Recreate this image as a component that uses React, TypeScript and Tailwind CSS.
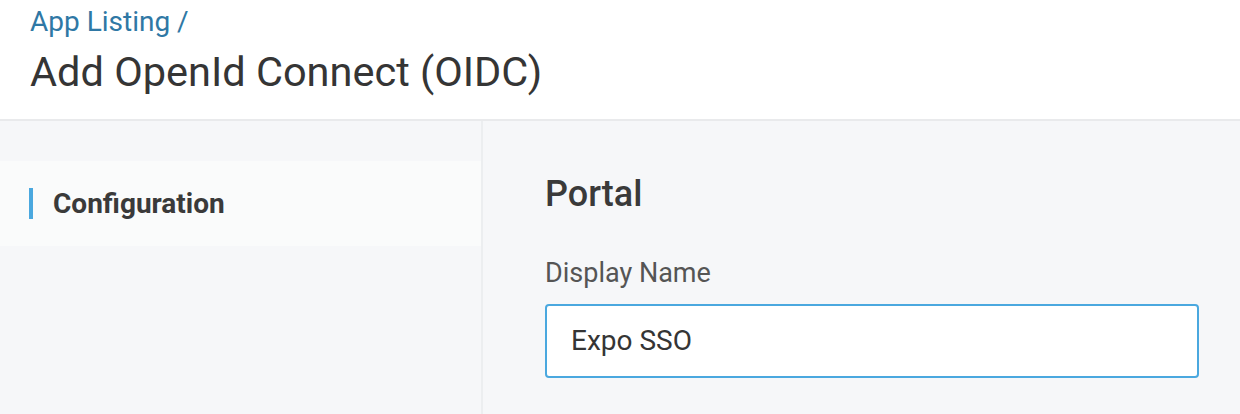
import React from "react";

export default function App() {
  return (
    <div className="w-[1240px] h-[414px] overflow-hidden bg-[#f6f7f9] flex flex-col" style={{ fontFamily: "Roboto, 'Noto Sans', sans-serif" }}>
      <header className="h-[121px] shrink-0 bg-white border-b-2 border-[#e9eaec] pl-[30px] pt-[6px]">
        <div className="text-[28px] leading-[32px] text-[#2f78a5]">App Listing /</div>
        <h1 className="mt-[9px] text-[41.5px] leading-[50px] text-[#353535]">Add OpenId Connect (OIDC)</h1>
      </header>
      <div className="flex flex-1">
        <aside className="w-[483px] shrink-0 border-r-2 border-[#eceef0] pt-[40px]">
          <div className="h-[85px] bg-[#fafbfb] flex items-center pl-[29px]">
            <span className="w-[4px] h-[31px] bg-[#4aa8df]" />
            <span className="ml-[20px] text-[28px] leading-[32px] font-bold text-[#3a3a3a]">Configuration</span>
          </div>
        </aside>
        <main className="flex-1 pl-[62px] pr-[41px] pt-[51px]">
          <h2 className="text-[36px] leading-[44px] font-medium text-[#3a3a3a]">Portal</h2>
          <label className="block mt-[41px] text-[27px] leading-[32px] text-[#555555]">Display Name</label>
          <div className="mt-[15px] h-[74px] bg-white border-2 border-[#4aa8df] rounded-[4px] flex items-center pl-[24px] text-[28px] text-[#353535]">
            Expo SSO
          </div>
        </main>
      </div>
    </div>
  );
}
